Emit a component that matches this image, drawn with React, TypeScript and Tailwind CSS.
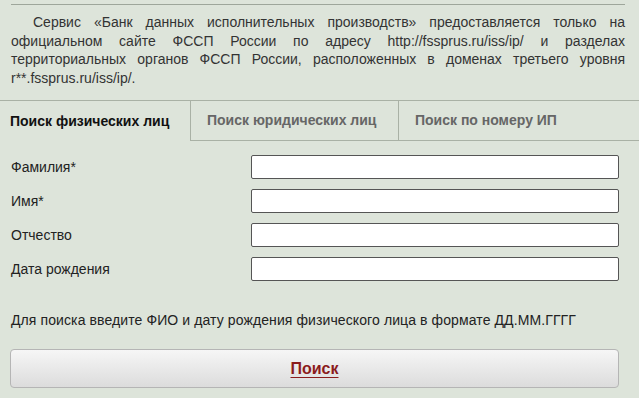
import React from "react";

export default function App() {
  const font = { fontFamily: '"Liberation Sans", Arial, sans-serif' };
  const fields = ["Фамилия*", "Имя*", "Отчество", "Дата рождения"];
  return (
    <div
      className="w-[639px] h-[398px] overflow-hidden bg-[#dde4da] relative"
      style={font}
    >
      <div className="mt-[4px] ml-[11px] mr-[14px] h-px bg-[#9ea69b]" />
      <p className="mt-[8px] ml-[11px] mr-[14px] text-[14px] leading-[18.5px] text-[#333] text-justify indent-[22px]">
        Сервис «Банк данных исполнительных производств» предоставляется только на
        официальном сайте ФССП России по адресу http://fssprus.ru/iss/ip/ и разделах
        территориальных органов ФССП России, расположенных в доменах третьего уровня
        r**.fssprus.ru/iss/ip/.
      </p>
      <div className="mt-[13px] flex h-[41px] border-t border-[#a9b1a5]">
        <div className="w-[190px] flex items-center pl-[10px] text-[14px] font-bold text-[#111]">
          Поиск физических лиц
        </div>
        <div className="w-[208px] flex items-center pl-[16px] text-[14px] font-bold text-[#666] border-l border-b border-[#a9b1a5]">
          Поиск юридических лиц
        </div>
        <div className="flex-1 flex items-center pl-[16px] text-[14px] font-bold text-[#666] border-l border-b border-[#a9b1a5]">
          Поиск по номеру ИП
        </div>
      </div>
      <div className="mt-[14px] flex flex-col gap-[10px]">
        {fields.map((f) => (
          <div key={f} className="flex items-center h-[24px]">
            <div className="w-[251px] pl-[11px] text-[14px] text-[#222]">{f}</div>
            <div className="w-[368px] h-[24px] bg-white border border-[#555] rounded-[2px]" />
          </div>
        ))}
      </div>
      <div className="mt-[29px] ml-[11px] text-[14px] text-[#222] tracking-[0.1px]">
        Для поиска введите ФИО и дату рождения физического лица в формате ДД.ММ.ГГГГ
      </div>
      <div className="mt-[18px] ml-[10px] w-[609px] h-[39px] rounded-[4px] border border-[#b5b5b5] bg-gradient-to-b from-[#f6f6f6] to-[#dcdcdc] flex items-center justify-center">
        <span className="text-[16px] font-bold text-[#8b1c1c] underline underline-offset-[3px]">
          Поиск
        </span>
      </div>
    </div>
  );
}
